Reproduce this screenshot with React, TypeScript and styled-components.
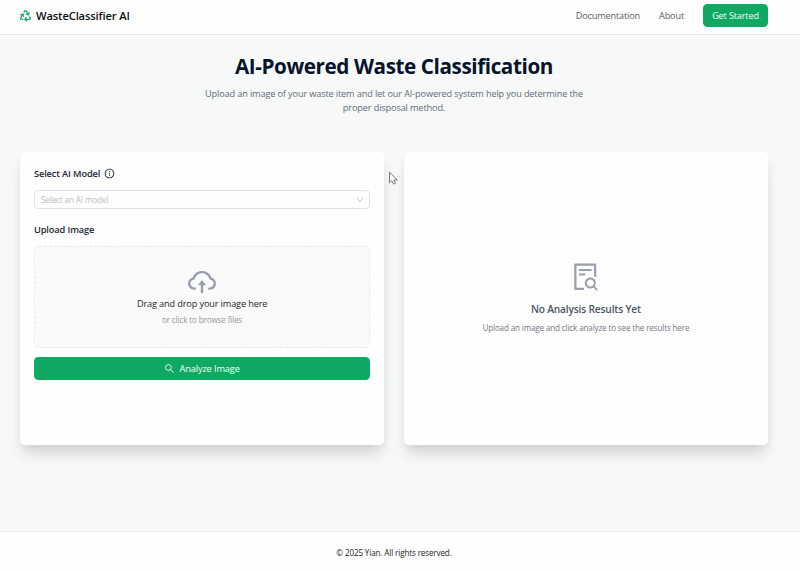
import React from "react";
import styled, { createGlobalStyle } from "styled-components";
import {
  AiOutlineCloudUpload,
  AiOutlineDown,
  AiOutlineFileSearch,
  AiOutlineInfoCircle,
  AiOutlineSearch,
} from "react-icons/ai";
import { Recycle } from "lucide-react";

const GlobalStyle = createGlobalStyle`
  *, *::before, *::after { box-sizing: border-box; }
  body {
    margin: 0;
    background: #fefefe;
    font-family: "Open Sans", "Noto Sans", sans-serif;
    letter-spacing: -0.13px;
    overflow: hidden;
  }
  h1, h2, h3, p { margin: 0; }
  svg { display: block; flex: none; }
`;

const Page = styled.div`
  height: 571px;
  display: flex;
  flex-direction: column;
`;

const Header = styled.header`
  flex: none;
  height: 35px;
  padding: 0 32px 3px 19px;
  display: flex;
  align-items: center;
  justify-content: space-between;
  background: #fefefe;
  border-bottom: 1px solid #e7e9e9;
`;

const Brand = styled.div`
  display: flex;
  align-items: center;
  gap: 4px;
  padding-top: 1px;
  color: #0c0f14;
  font-size: 11.18px;
  font-weight: 600;
  line-height: 16px;

  svg {
    margin-top: -2px;
    color: #12a864;
  }
`;

const Nav = styled.nav`
  display: flex;
  align-items: center;
`;

const NavLink = styled.a`
  margin-right: 19px;
  color: #555c66;
  font-size: 9.1px;
  line-height: 14px;
`;

const StartButton = styled.button`
  width: 65px;
  height: 23px;
  padding: 1px 0 0;
  border: 0;
  border-radius: 4.5px;
  background: #10a963;
  color: #f4fff9;
  font: 400 9.08px/22px "Open Sans", sans-serif;
  letter-spacing: -0.13px;
`;

const Main = styled.main`
  flex: 1;
  padding: 17px 32px 0 20px;
  background: #f7f9f9;
`;

const Hero = styled.section`
  display: flex;
  flex-direction: column;
  align-items: center;
  text-align: center;
`;

const Title = styled.h1`
  color: #08142a;
  font-size: 20.7px;
  font-weight: 700;
  line-height: 28px;
  letter-spacing: -0.42px;
`;

const Subtitle = styled.p`
  width: 392px;
  margin-top: 7px;
  color: #636b76;
  font-size: 9.16px;
  line-height: 14px;
`;

const Columns = styled.div`
  display: grid;
  grid-template-columns: 1fr 1fr;
  gap: 19.5px;
  margin-top: 37px;
`;

const Card = styled.section<{ $centered?: boolean }>`
  height: 293px;
  padding: 14px;
  display: flex;
  flex-direction: column;
  align-items: ${(p) => (p.$centered ? "center" : "stretch")};
  justify-content: ${(p) => (p.$centered ? "center" : "flex-start")};
  border-radius: 5px;
  background: #fefefe;
  box-shadow: 0 12px 15px -3px rgba(0, 0, 0, 0.13), 0 4px 10px -1px rgba(0, 0, 0, 0.05);
`;

const Label = styled.h2`
  display: flex;
  align-items: center;
  gap: 4px;
  height: 15px;
  color: #1b2534;
  font-size: 9.25px;
  font-weight: 600;
  line-height: 15px;
`;

const Select = styled.div`
  display: flex;
  align-items: center;
  justify-content: space-between;
  height: 19px;
  margin: 9px 0 13px;
  padding: 0 5px 0 6px;
  border: 1px solid #e1e1e1;
  border-radius: 4px;
  color: #bdbdbd;
  font-size: 8.15px;
`;

const DropZone = styled.div`
  display: flex;
  flex-direction: column;
  align-items: center;
  height: 102px;
  margin: 8.5px 0 9.5px;
  padding-top: 19px;
  border: 1px dashed #e8e8e8;
  border-radius: 5px;
  background: #fafafa;

  svg { color: #98a0ac; }
`;

const DropText = styled.p`
  margin-top: -1.5px;
  color: #262626;
  font-size: 9.16px;
  line-height: 15px;
`;

const DropHint = styled.p`
  margin-top: 2px;
  color: #969696;
  font-size: 8.1px;
  line-height: 14px;
`;

const AnalyzeButton = styled.button`
  display: flex;
  align-items: center;
  justify-content: center;
  gap: 4px;
  height: 23px;
  padding: 0;
  border: 0;
  border-radius: 4.5px;
  background: #10a963;
  color: #f4fff9;
  font: 400 9.25px/23px "Open Sans", sans-serif;
  letter-spacing: -0.13px;
`;

const EmptyIcon = styled(AiOutlineFileSearch)`
  margin-top: -1px;
  color: #98a0ac;
`;

const EmptyTitle = styled.h3`
  margin-top: 7px;
  color: #4a5563;
  font-size: 10.2px;
  font-weight: 600;
  line-height: 18px;
  letter-spacing: -0.17px;
`;

const EmptyText = styled.p`
  margin: 3px 0 1px;
  color: #737983;
  font-size: 8.05px;
  line-height: 14px;
`;

const Footer = styled.footer`
  flex: none;
  height: 40px;
  padding: 2px 12px 0 0;
  display: flex;
  align-items: center;
  justify-content: center;
  border-top: 1px solid #eceeee;
  background: #fefefe;
  color: #262626;
  font-size: 8.08px;
`;

const Pointer = styled.svg`
  position: absolute;
  left: 388px;
  top: 171px;
`;

export default function App() {
  return (
    <Page>
      <GlobalStyle />
      <Header>
        <Brand>
          <Recycle size={13} strokeWidth={2.3} />
          WasteClassifier AI
        </Brand>
        <Nav>
          <NavLink>Documentation</NavLink>
          <NavLink>About</NavLink>
          <StartButton>Get Started</StartButton>
        </Nav>
      </Header>
      <Main>
        <Hero>
          <Title>AI-Powered Waste Classification</Title>
          <Subtitle>
            Upload an image of your waste item and let our AI-powered system help you determine the
            proper disposal method.
          </Subtitle>
        </Hero>
        <Columns>
          <Card>
            <Label>
              Select AI Model
              <AiOutlineInfoCircle size={11} />
            </Label>
            <Select>
              Select an AI model
              <AiOutlineDown size={8} />
            </Select>
            <Label>Upload Image</Label>
            <DropZone>
              <AiOutlineCloudUpload size={32} />
              <DropText>Drag and drop your image here</DropText>
              <DropHint>or click to browse files</DropHint>
            </DropZone>
            <AnalyzeButton>
              <AiOutlineSearch size={11} />
              Analyze Image
            </AnalyzeButton>
          </Card>
          <Card $centered>
            <EmptyIcon size={32} />
            <EmptyTitle>No Analysis Results Yet</EmptyTitle>
            <EmptyText>Upload an image and click analyze to see the results here</EmptyText>
          </Card>
        </Columns>
      </Main>
      <Footer>© 2025 Yian. All rights reserved.</Footer>
      <Pointer width="11" height="15" viewBox="0 0 11 15">
        <path
          d="M1.5 1.2v10.6l2.4-2.2 1.7 3.5 1.9-.9-1.6-3.3h3.4z"
          fill="#fbfbfb"
          stroke="#555"
          strokeWidth="0.8"
        />
      </Pointer>
    </Page>
  );
}
